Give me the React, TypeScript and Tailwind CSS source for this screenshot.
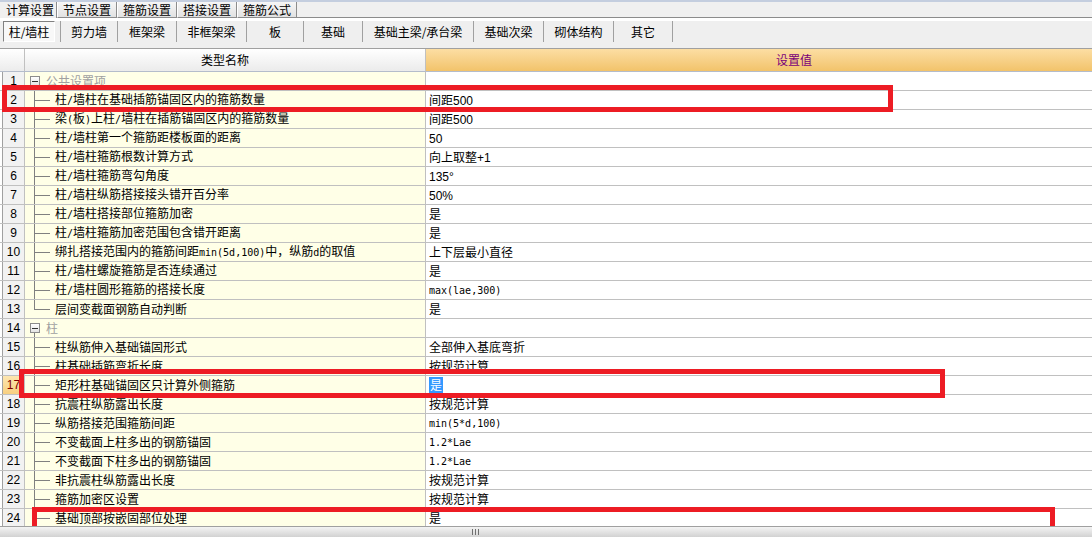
import React from "react";

// ascii runs get their own font, the rest falls to the CJK face
const LATIN = /([\x20-\x7e\u00b0]+)/;
const mono = "font-['DejaVu_Sans_Mono',monospace] text-[10px]";
const sans = "font-['Liberation_Sans',sans-serif] text-[12px]";

type Row = {
  n: number;
  name: string;
  value?: string;
  group?: boolean;
  last?: boolean;
  vmono?: boolean;
  selected?: boolean;
};

const rows: Row[] = [
  { n: 1, name: "公共设置项", group: true },
  { n: 2, name: "柱/墙柱在基础插筋锚固区内的箍筋数量", value: "间距500" },
  { n: 3, name: "梁(板)上柱/墙柱在插筋锚固区内的箍筋数量", value: "间距500" },
  { n: 4, name: "柱/墙柱第一个箍筋距楼板面的距离", value: "50" },
  { n: 5, name: "柱/墙柱箍筋根数计算方式", value: "向上取整+1" },
  { n: 6, name: "柱/墙柱箍筋弯勾角度", value: "135°" },
  { n: 7, name: "柱/墙柱纵筋搭接接头错开百分率", value: "50%" },
  { n: 8, name: "柱/墙柱搭接部位箍筋加密", value: "是" },
  { n: 9, name: "柱/墙柱箍筋加密范围包含错开距离", value: "是" },
  { n: 10, name: "绑扎搭接范围内的箍筋间距min(5d,100)中，纵筋d的取值", value: "上下层最小直径" },
  { n: 11, name: "柱/墙柱螺旋箍筋是否连续通过", value: "是" },
  { n: 12, name: "柱/墙柱圆形箍筋的搭接长度", value: "max(lae,300)", vmono: true },
  { n: 13, name: "层间变截面钢筋自动判断", value: "是", last: true },
  { n: 14, name: "柱", group: true },
  { n: 15, name: "柱纵筋伸入基础锚固形式", value: "全部伸入基底弯折" },
  { n: 16, name: "柱基础插筋弯折长度", value: "按规范计算" },
  { n: 17, name: "矩形柱基础锚固区只计算外侧箍筋", value: "是", selected: true },
  { n: 18, name: "抗震柱纵筋露出长度", value: "按规范计算" },
  { n: 19, name: "纵筋搭接范围箍筋间距", value: "min(5*d,100)", vmono: true },
  { n: 20, name: "不变截面上柱多出的钢筋锚固", value: "1.2*Lae", vmono: true },
  { n: 21, name: "不变截面下柱多出的钢筋锚固", value: "1.2*Lae", vmono: true },
  { n: 22, name: "非抗震柱纵筋露出长度", value: "按规范计算" },
  { n: 23, name: "箍筋加密区设置", value: "按规范计算" },
  { n: 24, name: "基础顶部按嵌固部位处理", value: "是" },
];

const tabs = ["节点设置", "箍筋设置", "搭接设置", "箍筋公式"];

const tools: [string, number][] = [
  ["剪力墙", 57],
  ["框架梁", 59],
  ["非框架梁", 70],
  ["板", 57],
  ["基础", 59],
  ["基础主梁/承台梁", 111],
  ["基础次梁", 70],
  ["砌体结构", 70],
  ["其它", 59],
];

function Mixed({ s, latin }: { s: string; latin: string }) {
  const parts = s.split(LATIN).filter(Boolean);
  return (
    <>
      {parts.map((p, i) =>
        LATIN.test(p) ? (
          <span key={i} className={latin}>
            {p}
          </span>
        ) : (
          <span key={i}>{p}</span>
        )
      )}
    </>
  );
}

function GridRow({ row }: { row: Row }) {
  return (
    <div className="flex h-[19px] shrink-0 border-b border-[#c0c0c0]">
      <div
        className={
          row.selected
            ? "ml-[2px] flex w-[23px] shrink-0 items-center justify-center border-x border-l-[#a0a0a0] border-r-[#c0c0c0] bg-gradient-to-b from-[#fde6b0] to-[#f7cf7f] font-['Liberation_Sans',sans-serif] text-[12px] text-[#800000]"
            : "ml-[2px] flex w-[23px] shrink-0 items-center justify-center border-x border-l-[#a0a0a0] border-r-[#c0c0c0] bg-[#f2f2f2] font-['Liberation_Sans',sans-serif] text-[12px] text-black"
        }
      >
        {row.n}
      </div>
      <div className="relative flex w-[401px] shrink-0 items-center border-r border-[#c0c0c0] bg-[#ffffe7]">
        {row.group ? (
          <>
            <div className="ml-[5px] flex h-[10px] w-[10px] items-center justify-center border border-[#8c8c8c] bg-gradient-to-b from-white to-[#e4e4e4]">
              <div className="h-px w-[6px] bg-[#333]" />
            </div>
            <span className="absolute bottom-0 left-[9px] top-[14px] w-px bg-[#808080]" />
            <span className="ml-[6px] text-[#a0a0a0]">{row.name}</span>
          </>
        ) : (
          <>
            <div className="ml-[9px] flex w-[16px] flex-col self-stretch">
              <div className="flex-1 border-b border-l border-[#808080]" />
              <div className={row.last ? "flex-1" : "flex-1 border-l border-[#808080]"} />
            </div>
            <span className="ml-[5px] whitespace-nowrap">
              <Mixed s={row.name} latin={mono} />
            </span>
          </>
        )}
      </div>
      <div className="flex w-[736px] shrink-0 items-center bg-white pl-[3px]">
        {row.selected ? (
          <span className="bg-[#3399ff] px-px text-white">{row.value}</span>
        ) : row.value ? (
          <span className="whitespace-nowrap">
            <Mixed s={row.value} latin={row.vmono ? mono : sans} />
          </span>
        ) : null}
      </div>
    </div>
  );
}

export default function App() {
  return (
    <div className="relative flex h-[537px] w-[1092px] flex-col overflow-hidden bg-[#f0f0f0] font-['Noto_Sans_CJK_SC',sans-serif] text-[12px] leading-[16px] text-black">
      {/* sheet tabs */}
      <div className="flex h-[18px] shrink-0 border-t-2 border-[#c4cedf] bg-[#f0f0f0]">
        <div className="w-[57px] border-r border-[#8c8c8c] pl-[6px] leading-[15px]">计算设置</div>
        {tabs.map((t) => (
          <div
            key={t}
            className="w-[60px] border-b border-l border-r border-b-[#8c8c8c] border-l-white border-r-[#8c8c8c] bg-gradient-to-b from-[#f6f6f6] to-[#e2e2e2] pl-[5px] leading-[15px]"
          >
            {t}
          </div>
        ))}
        <div className="flex-1 border-b border-[#8c8c8c]" />
      </div>

      {/* component buttons */}
      <div className="flex h-[31px] shrink-0 items-start border-b border-t-[3px] border-b-[#a0a0a0] border-t-white bg-[#efefef]">
        <div className="flex h-[21px] w-[61px] border-r border-[#a0a0a0]">
          <div className="ml-[3px] flex h-[21px] w-[52px] items-center justify-center border border-b-white border-l-[#808080] border-r-white border-t-[#808080] bg-[#f8f8f8]">
            柱/墙柱
          </div>
        </div>
        {tools.map(([t, w]) => (
          <div
            key={t}
            className="flex h-[21px] items-center justify-center border-r border-[#a0a0a0]"
            style={{ width: w }}
          >
            {t}
          </div>
        ))}
      </div>

      {/* header */}
      <div className="flex h-[23px] shrink-0 border-b border-[#b4bccb]">
        <div className="w-[25px] shrink-0 border-r border-[#c0c0c0] bg-gradient-to-b from-white to-[#ececec]" />
        <div className="flex w-[401px] shrink-0 items-center justify-center border-r border-[#c0c0c0] bg-gradient-to-b from-white to-[#ebebeb]">
          类型名称
        </div>
        <div className="flex w-[736px] shrink-0 items-center justify-center bg-gradient-to-b from-[#fcdea3] to-[#f2c36a] text-[#7a007a]">
          设置值
        </div>
      </div>

      {/* rows */}
      <div className="flex min-h-0 flex-1 flex-col overflow-hidden bg-white">
        {rows.map((r) => (
          <GridRow key={r.n} row={r} />
        ))}
      </div>

      {/* horizontal scrollbar */}
      <div className="relative z-10 flex h-[11px] shrink-0 items-center border-t border-[#a0a0a0] bg-gradient-to-b from-[#f4f4f4] to-[#d2d2d2] pl-[472px]">
        <div className="flex h-[6px] gap-[2px]">
          <div className="w-px bg-[#707070]" />
          <div className="w-px bg-[#707070]" />
          <div className="w-px bg-[#707070]" />
        </div>
      </div>

      {/* red annotation boxes */}
      <div className="pointer-events-none absolute left-[2px] top-[85px] h-[27px] w-[891px] border-[5px] border-[#ed1c24]" />
      <div className="pointer-events-none absolute left-[19px] top-[369px] h-[29px] w-[926px] border-[5px] border-[#ed1c24]" />
      <div className="pointer-events-none absolute left-[32px] top-[507px] h-[40px] w-[1023px] border-[5px] border-[#ed1c24]" />
    </div>
  );
}
